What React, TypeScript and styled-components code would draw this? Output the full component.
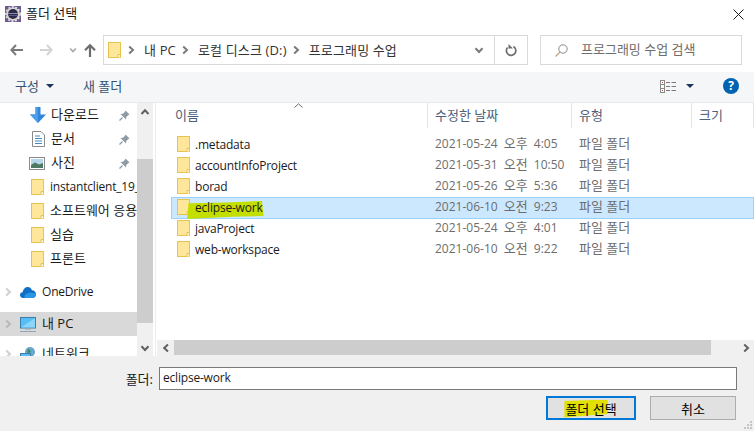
import styled, { createGlobalStyle } from 'styled-components'

const uiFont = `"Open Sans", "Noto Sans CJK KR", sans-serif`

const GlobalStyle = createGlobalStyle`
  html, body {
    margin: 0;
    padding: 0;
    background: #fff;
  }
  #root {
    width: 754px;
    height: 431px;
    overflow: hidden;
  }
  * {
    box-sizing: border-box;
  }
`

const FolderIcon = () => (
  <svg width="14" height="17" viewBox="0 0 14 17" style={{ flex: 'none' }}>
    <rect x="0.5" y="0.5" width="12" height="15" fill="#fee79a" stroke="#e9c34f" />
    <path d="M10 15.5V12.5H12.5V15.5" fill="#fff3c4" stroke="#e9c34f" />
  </svg>
)

const Chevron = ({ dir, size = 10, color = '#606060', width = 2 }: { dir: 'up' | 'down' | 'left' | 'right'; size?: number; color?: string; width?: number }) => {
  const paths = {
    up: 'M1.5 7L5 3.2L8.5 7',
    down: 'M1.5 3.2L5 7L8.5 3.2',
    left: 'M7 1.5L3.2 5L7 8.5',
    right: 'M3.2 1.5L7 5L3.2 8.5',
  }
  return (
    <svg width={size} height={size} viewBox="0 0 10 10">
      <path d={paths[dir]} fill="none" stroke={color} strokeWidth={width} />
    </svg>
  )
}

const ArrowIcon = ({ color, flip = false }: { color: string; flip?: boolean }) => (
  <svg width="13" height="12" viewBox="0 0 13 12" style={{ transform: flip ? 'scaleX(-1)' : undefined }}>
    <path d="M6 1L1.4 6L6 11M1.4 6H13" fill="none" stroke={color} strokeWidth="2" />
  </svg>
)

const UpIcon = () => (
  <svg width="12" height="13" viewBox="0 0 12 13">
    <path d="M1 6.2L6 1.2L11 6.2M6 1.2V13" fill="none" stroke="#6d6d6d" strokeWidth="2.2" />
  </svg>
)

const AppIcon = () => (
  <svg width="16" height="16" viewBox="0 0 16 16">
    <rect width="16" height="16" fill="#6b5a94" />
    <circle cx="8" cy="8" r="6.8" fill="#d9d6d0" />
    <circle cx="8" cy="8" r="7.2" fill="none" stroke="#e6e4de" strokeWidth="1.4" strokeDasharray="2 1.6" />
    <circle cx="8" cy="8" r="5" fill="#2c2a4a" />
    <rect x="3" y="7" width="10" height="1" fill="#8f8cb0" />
    <rect x="3.5" y="9" width="9" height="1" fill="#5f5c86" />
  </svg>
)

const DownloadIcon = () => (
  <svg width="16" height="16" viewBox="0 0 16 16">
    <path d="M5.5 0H10.5V7.5H16L8 16L0 7.5H5.5Z" fill="#2f86dc" />
    <path d="M5.5 0H8V16L0 7.5H5.5Z" fill="#4a9eea" />
  </svg>
)

const DocIcon = () => (
  <svg width="13" height="16" viewBox="0 0 13 16">
    <path d="M0.5 0.5H9L12.5 4V15.5H0.5Z" fill="#fff" stroke="#8a8a8a" />
    <path d="M3 5H8M3 7.5H10M3 10H10M3 12.5H10" stroke="#3c8fc4" />
  </svg>
)

const PictureIcon = () => (
  <svg width="16" height="13" viewBox="0 0 16 13">
    <rect x="0.5" y="0.5" width="15" height="12" fill="#fff" stroke="#8a8a8a" />
    <rect x="2" y="2" width="12" height="9" fill="#b7d6ea" />
    <path d="M2 8L6 5.5L10 7.5L14 6V11H2Z" fill="#4c7a62" />
  </svg>
)

const PinIcon = () => (
  <svg width="11" height="11" viewBox="0 0 11 11">
    <path d="M6.5 0.5L10.5 4.5L9.3 5L7.3 7L7 9.5L1.5 4L4 3.7L6 1.7Z" fill="#8e9aa3" />
    <path d="M3.5 7.5L0.5 10.5" stroke="#8e9aa3" strokeWidth="1.2" />
  </svg>
)

const CloudIcon = () => (
  <svg width="16" height="11" viewBox="0 0 16 11">
    <path d="M3 11C1 11 0 9.5 0 8C0 6.5 1 5.3 2.6 5.2C3.2 2 5.2 0 7.6 0C9.6 0 11.2 1.2 11.9 3.2C14.2 3.2 16 5 16 7.2C16 9.4 14.4 11 12.4 11Z" fill="#0f6fc6" />
    <path d="M6 11C4.5 11 4 9.8 4.6 8.8C5.2 7.4 7.2 5.8 9.8 5.8C12.6 5.8 16 6 16 8C16 9.6 14.4 11 12.4 11Z" fill="#2a96e4" />
  </svg>
)

const MonitorIcon = () => (
  <svg width="16" height="15" viewBox="0 0 16 15">
    <rect x="0.5" y="0.5" width="15" height="10.5" fill="#56bdf5" stroke="#3b7fa8" />
    <path d="M1 10.5L15 1V10.5Z" fill="#8ad6fb" />
    <rect x="5" y="11.5" width="6" height="1" fill="#9aa8b2" />
    <rect x="0" y="14" width="16" height="1" fill="#8fa3b2" />
  </svg>
)

const NetworkIcon = () => (
  <svg width="16" height="15" viewBox="0 0 16 15">
    <circle cx="10" cy="5" r="5" fill="#6aa6cf" />
    <path d="M8 1.5L11 4L9 7L7 5Z" fill="#3f8f6a" />
    <rect x="0.5" y="6.5" width="10" height="8" fill="#56bdf5" stroke="#3b7fa8" />
  </svg>
)

const RefreshIcon = () => (
  <svg width="12" height="13" viewBox="0 0 12 13">
    <path d="M9.3 3.2A4.7 4.7 0 1 1 3.4 2.9" fill="none" stroke="#6d6d6d" strokeWidth="1.7" transform="rotate(-12 6 7)" />
    <path d="M6.5 0V4.6H11Z" fill="#6d6d6d" transform="translate(-3 0)" />
  </svg>
)

const SearchIcon = () => (
  <svg width="13" height="13" viewBox="0 0 13 13">
    <circle cx="8" cy="5" r="4.2" fill="none" stroke="#8a8a8a" />
    <path d="M5 8L0.5 12.5" stroke="#c6a27e" strokeWidth="1.2" />
  </svg>
)

const ViewIcon = () => (
  <svg width="16" height="13" viewBox="0 0 16 13">
    <rect x="0.5" y="0.5" width="4" height="12" fill="#fff" stroke="#8a8a8a" />
    <path d="M1 4.5H4M1 8.5H4" stroke="#8a8a8a" />
    <rect x="2" y="2" width="1" height="1" fill="#c44" />
    <rect x="2" y="10" width="1" height="1" fill="#c44" />
    <path d="M6 2.5H10M11.5 2.5H16M6 6.5H10M11.5 6.5H16M6 10.5H10M11.5 10.5H16" stroke="#7a7a7a" />
  </svg>
)

const CloseIcon = () => (
  <svg width="11" height="11" viewBox="0 0 11 11">
    <path d="M0.5 0.5L10.5 10.5M10.5 0.5L0.5 10.5" stroke="#1a1a1a" strokeWidth="1" />
  </svg>
)

const Dialog = styled.div`
  width: 754px;
  height: 431px;
  display: flex;
  flex-direction: column;
  background: #fff;
  font-family: ${uiFont};
  font-size: 13px;
  color: #1a1a1a;
  overflow: hidden;
`

const TitleBar = styled.div`
  height: 34px;
  flex: none;
  display: flex;
  align-items: center;
  padding: 0 10px 6px 5px;
  gap: 5px;
`

const TitleText = styled.span`
  flex: 1;
  padding-bottom: 3px;
`

const NavBar = styled.div`
  height: 38px;
  flex: none;
  display: flex;
  padding-top: 1px;
`

const NavButtons = styled.div`
  width: 103px;
  height: 30px;
  flex: none;
  display: grid;
  grid-template-columns: 30px 29px 15px 12px;
  padding-left: 10px;
  align-items: center;
  justify-items: start;
`

const AddressBox = styled.div`
  width: 425px;
  height: 30px;
  flex: none;
  display: flex;
  align-items: center;
  border: 1px solid #d9d9d9;
  padding-left: 4px;
`

const Crumb = styled.span`
  margin-left: 4px;
  padding-bottom: 2px;
  white-space: nowrap;
  color: #333;
  letter-spacing: 0.15px;
`

const CrumbGrow = styled.div`
  flex: 1;
  display: flex;
  align-items: center;
  gap: 4px;
  margin-left: 4px;
`

const AddressDrop = styled.div`
  width: 30px;
  display: flex;
  justify-content: center;
`

const RefreshButton = styled.div`
  width: 33px;
  height: 100%;
  flex: none;
  display: flex;
  align-items: center;
  justify-content: center;
  border-left: 1px solid #d9d9d9;
`

const SearchBox = styled.div`
  width: 202px;
  height: 30px;
  margin-left: 12px;
  flex: none;
  display: flex;
  align-items: center;
  gap: 13px;
  padding-left: 14px;
  border: 1px solid #d9d9d9;
  color: #6d6d6d;
`

const SearchHint = styled.span`
  padding-bottom: 4px;
`

const Toolbar = styled.div`
  height: 31px;
  flex: none;
  display: flex;
  align-items: center;
  background: #f5f6f7;
  border-bottom: 1px solid #e8e8e8;
  padding: 0 15px 2px;
  color: #33506e;
`

const ToolLabel = styled.span`
  white-space: nowrap;
  padding-bottom: 2px;
`

const Caret = styled.span<{ $gap: number }>`
  width: 0;
  height: 0;
  margin-left: ${({ $gap }) => $gap}px;
  border-left: 4px solid transparent;
  border-right: 4px solid transparent;
  border-top: 4px solid #1c3556;
`

const NewFolder = styled(ToolLabel)`
  margin-left: 29px;
  flex: 1;
`

const HelpBadge = styled.span`
  width: 16px;
  height: 16px;
  margin-left: 29px;
  border-radius: 50%;
  background: #0063b1;
  color: #fff;
  font-size: 12px;
  font-weight: 700;
  line-height: 16px;
  text-align: center;
`

const Main = styled.div`
  height: 253px;
  flex: none;
  display: flex;
  overflow: hidden;
`

const Sidebar = styled.div`
  width: 137px;
  flex: none;
  display: flex;
  flex-direction: column;
  overflow: hidden;
`

const NavItem = styled.div<{ $active?: boolean; $top?: number }>`
  height: 24px;
  flex: none;
  margin-top: ${({ $top }) => $top ?? 0}px;
  display: flex;
  align-items: center;
  background: ${({ $active }) => ($active ? '#d9d9d9' : 'transparent')};
  white-space: nowrap;
  overflow: hidden;
`

const Expander = styled.span`
  width: 20px;
  flex: none;
  display: flex;
  padding-left: 3px;
`

const IconSlot = styled.span<{ $left: number }>`
  width: 16px;
  flex: none;
  margin-left: ${({ $left }) => $left}px;
  display: flex;
  justify-content: center;
`

const NavLabel = styled.span<{ $gap: number; $latin?: boolean }>`
  margin-left: ${({ $gap }) => $gap}px;
  flex: 1;
  min-width: 0;
  overflow: hidden;
  padding-bottom: ${({ $latin }) => ($latin ? 2 : 4)}px;
  font-size: ${({ $latin }) => ($latin ? 12 : 13)}px;
  letter-spacing: ${({ $latin }) => ($latin ? '-0.2px' : '0')};
`

const PinSlot = styled.span`
  width: 12px;
  flex: none;
  margin-right: 6px;
  display: flex;
`

const VScroll = styled.div`
  width: 16px;
  flex: none;
  display: flex;
  flex-direction: column;
  background: #f0f0f0;
`

const VArrow = styled.div`
  height: 17px;
  flex: none;
  display: flex;
  align-items: center;
  justify-content: center;
`

const VSpace = styled.div<{ $h: number }>`
  height: ${({ $h }) => $h}px;
  flex: none;
`

const VThumb = styled.div`
  height: 164px;
  flex: none;
  background: #cdcdcd;
`

const Content = styled.div`
  flex: 1;
  min-width: 0;
  margin-left: 2px;
  border-left: 1px solid #ececec;
  display: flex;
  flex-direction: column;
`

const ColumnHead = styled.div`
  height: 25px;
  flex: none;
  position: relative;
  display: grid;
  grid-template-columns: 272px 144px 120px 1fr;
  color: #4c607a;
`

const HeadCell = styled.div<{ $pad: number }>`
  padding-left: ${({ $pad }) => $pad}px;
  padding-top: 2px;
  border-right: 1px solid #e5e5e5;
  white-space: nowrap;
  overflow: hidden;
`

const SortCaret = styled.svg`
  position: absolute;
  left: 138px;
  top: 0;
`

const FileList = styled.div`
  flex: 1;
  display: flex;
  flex-direction: column;
  padding: 6px 0 0 15px;
`

const FileRow = styled.div<{ $selected?: boolean }>`
  height: ${({ $selected }) => ($selected ? 22 : 21)}px;
  margin-bottom: ${({ $selected }) => ($selected ? -1 : 0)}px;
  padding-bottom: ${({ $selected }) => ($selected ? 1 : 0)}px;
  flex: none;
  display: grid;
  grid-template-columns: 257px 144px 120px 1fr;
  align-items: center;
  background: ${({ $selected }) => ($selected ? '#cce8ff' : 'transparent')};
  box-shadow: ${({ $selected }) => ($selected ? 'inset 0 0 0 1px #99d1ff' : 'none')};
`

const NameCell = styled.div`
  display: flex;
  align-items: center;
  gap: 4px;
  padding-left: 6px;
  white-space: nowrap;
  font-size: 12px;
  letter-spacing: -0.2px;
`

const Marked = styled.span`
  position: relative;
  z-index: 0;
`

const FileMarker = styled.span`
  position: absolute;
  z-index: -1;
  left: -8px;
  right: -1px;
  top: 2px;
  bottom: -3px;
  background: #c4de00;
  clip-path: polygon(2% 12%, 50% 8%, 98% 0, 100% 84%, 60% 88%, 0 100%);
`

const ButtonMarker = styled.span`
  position: absolute;
  z-index: -1;
  left: -1px;
  right: 9px;
  top: 1px;
  bottom: 0;
  background: #e2e000;
  clip-path: polygon(0 8%, 50% 4%, 100% 0, 100% 80%, 60% 88%, 0 100%);
`

const MetaCell = styled.div`
  color: #6d6d6d;
  white-space: nowrap;
  padding: 0 0 2px 7px;
  font-size: 12px;
  line-height: 16px;
  word-spacing: 3px;
`

const MetaKo = styled.span`
  font-size: 13px;
  word-spacing: 0;
`

const HScroll = styled.div`
  height: 16px;
  flex: none;
  margin-left: 1px;
  display: flex;
  align-items: stretch;
  background: #f0f0f0;
`

const HArrow = styled.div`
  width: 17px;
  flex: none;
  display: flex;
  align-items: center;
  justify-content: center;
`

const HThumb = styled.div`
  width: 537px;
  height: 15px;
  flex: none;
  background: #cdcdcd;
`

const HSpace = styled.div`
  flex: 1;
`

const Footer = styled.div`
  flex: 1;
  position: relative;
  background: #f0f0f0;
  display: flex;
  flex-direction: column;
  padding: 11px 17px 0 0;
`

const FolderRow = styled.div`
  display: flex;
  align-items: center;
  justify-content: flex-end;
  gap: 6px;
`

const FolderInput = styled.div`
  width: 578px;
  height: 23px;
  border: 1px solid #7a7a7a;
  background: #fff;
  padding-left: 3px;
  line-height: 20px;
  font-size: 12px;
  letter-spacing: -0.2px;
`

const ButtonRow = styled.div`
  display: flex;
  justify-content: flex-end;
  gap: 14px;
  margin: 6px 1px 0 0;
`

const DialogButton = styled.div<{ $primary?: boolean }>`
  width: ${({ $primary }) => ($primary ? 90 : 86)}px;
  height: 24px;
  display: flex;
  align-items: center;
  justify-content: center;
  background: #e1e1e1;
  border: ${({ $primary }) => ($primary ? '2px solid #0078d7' : '1px solid #adadad')};
  color: #000;
`

const Grip = styled.svg`
  position: absolute;
  right: 1px;
  bottom: 1px;
`

const files = [
  { name: '.metadata', date: '2021-05-24', period: '오후', time: '4:05' },
  { name: 'accountInfoProject', date: '2021-05-31', period: '오전', time: '10:50' },
  { name: 'borad', date: '2021-05-26', period: '오후', time: '5:36' },
  { name: 'eclipse-work', date: '2021-06-10', period: '오전', time: '9:23', selected: true },
  { name: 'javaProject', date: '2021-05-24', period: '오후', time: '4:01' },
  { name: 'web-workspace', date: '2021-06-10', period: '오전', time: '9:22' },
]

export default function App() {
  return (
    <>
      <GlobalStyle />
      <Dialog>
        <TitleBar>
          <AppIcon />
          <TitleText>폴더 선택</TitleText>
          <CloseIcon />
        </TitleBar>

        <NavBar>
          <NavButtons>
            <ArrowIcon color="#7a7a7a" />
            <ArrowIcon color="#d4d4d4" flip />
            <Chevron dir="down" size={8} color="#a8a8a8" />
            <UpIcon />
          </NavButtons>
          <AddressBox>
            <FolderIcon />
            <CrumbGrow>
              <Chevron dir="right" color="#7a7a7a" />
              <Crumb>내 PC</Crumb>
              <Chevron dir="right" color="#7a7a7a" />
              <Crumb>로컬 디스크 (D:)</Crumb>
              <Chevron dir="right" color="#7a7a7a" />
              <Crumb>프로그래밍 수업</Crumb>
            </CrumbGrow>
            <AddressDrop>
              <Chevron dir="down" color="#7a7a7a" />
            </AddressDrop>
            <RefreshButton>
              <RefreshIcon />
            </RefreshButton>
          </AddressBox>
          <SearchBox>
            <SearchIcon />
            <SearchHint>프로그래밍 수업 검색</SearchHint>
          </SearchBox>
        </NavBar>

        <Toolbar>
          <ToolLabel>구성</ToolLabel>
          <Caret $gap={7} />
          <NewFolder>새 폴더</NewFolder>
          <ViewIcon />
          <Caret $gap={10} />
          <HelpBadge>?</HelpBadge>
        </Toolbar>

        <Main>
          <Sidebar>
            <NavItem>
              <IconSlot $left={30}><DownloadIcon /></IconSlot>
              <NavLabel $gap={5}>다운로드</NavLabel>
              <PinSlot><PinIcon /></PinSlot>
            </NavItem>
            <NavItem>
              <IconSlot $left={30}><DocIcon /></IconSlot>
              <NavLabel $gap={5}>문서</NavLabel>
              <PinSlot><PinIcon /></PinSlot>
            </NavItem>
            <NavItem>
              <IconSlot $left={29}><PictureIcon /></IconSlot>
              <NavLabel $gap={6}>사진</NavLabel>
              <PinSlot><PinIcon /></PinSlot>
            </NavItem>
            <NavItem>
              <IconSlot $left={30}><FolderIcon /></IconSlot>
              <NavLabel $gap={4} $latin>instantclient_19_</NavLabel>
            </NavItem>
            <NavItem>
              <IconSlot $left={30}><FolderIcon /></IconSlot>
              <NavLabel $gap={4}>소프트웨어 응용</NavLabel>
            </NavItem>
            <NavItem>
              <IconSlot $left={30}><FolderIcon /></IconSlot>
              <NavLabel $gap={4}>실습</NavLabel>
            </NavItem>
            <NavItem>
              <IconSlot $left={30}><FolderIcon /></IconSlot>
              <NavLabel $gap={4}>프론트</NavLabel>
            </NavItem>
            <NavItem $top={9}>
              <Expander><Chevron dir="right" color="#d0d0d0" /></Expander>
              <CloudIcon />
              <NavLabel $gap={6} $latin>OneDrive</NavLabel>
            </NavItem>
            <NavItem $active $top={8}>
              <Expander><Chevron dir="right" color="#b8b8b8" /></Expander>
              <MonitorIcon />
              <NavLabel $gap={6}>내 PC</NavLabel>
            </NavItem>
            <NavItem $top={6}>
              <Expander><Chevron dir="right" color="#d0d0d0" /></Expander>
              <NetworkIcon />
              <NavLabel $gap={6}>네트워크</NavLabel>
            </NavItem>
          </Sidebar>

          <VScroll>
            <VArrow><Chevron dir="up" /></VArrow>
            <VSpace $h={39} />
            <VThumb />
            <VSpace $h={16} />
            <VArrow><Chevron dir="down" /></VArrow>
          </VScroll>

          <Content>
            <ColumnHead>
              <HeadCell $pad={19}>이름</HeadCell>
              <HeadCell $pad={7}>수정한 날짜</HeadCell>
              <HeadCell $pad={7}>유형</HeadCell>
              <HeadCell $pad={7}>크기</HeadCell>
              <SortCaret width="9" height="5" viewBox="0 0 9 5">
                <path d="M0.5 4.5L4.5 0.8L8.5 4.5" fill="none" stroke="#6d6d6d" />
              </SortCaret>
            </ColumnHead>
            <FileList>
              {files.map((file) => (
                <FileRow key={file.name} $selected={file.selected}>
                  <NameCell>
                    <FolderIcon />
                    {file.selected ? (
                      <Marked>
                        {file.name}
                        <FileMarker />
                      </Marked>
                    ) : (
                      <span>{file.name}</span>
                    )}
                  </NameCell>
                  <MetaCell>
                    {file.date} <MetaKo>{file.period}</MetaKo> {file.time}
                  </MetaCell>
                  <MetaCell>
                    <MetaKo>파일 폴더</MetaKo>
                  </MetaCell>
                </FileRow>
              ))}
            </FileList>
            <HScroll>
              <HArrow><Chevron dir="left" /></HArrow>
              <HThumb />
              <HSpace />
              <HArrow><Chevron dir="right" /></HArrow>
            </HScroll>
          </Content>
        </Main>

        <Footer>
          <FolderRow>
            <span>폴더:</span>
            <FolderInput>eclipse-work</FolderInput>
          </FolderRow>
          <ButtonRow>
            <DialogButton $primary>
              <Marked>
                폴더 선택
                <ButtonMarker />
              </Marked>
            </DialogButton>
            <DialogButton>취소</DialogButton>
          </ButtonRow>
          <Grip width="10" height="10" viewBox="0 0 10 10">
            <path d="M7 1h2v2H7zM4 4h2v2H4zM7 4h2v2H7zM1 7h2v2H1zM4 7h2v2H4zM7 7h2v2H7z" fill="#c4c4c4" />
          </Grip>
        </Footer>
      </Dialog>
    </>
  )
}
